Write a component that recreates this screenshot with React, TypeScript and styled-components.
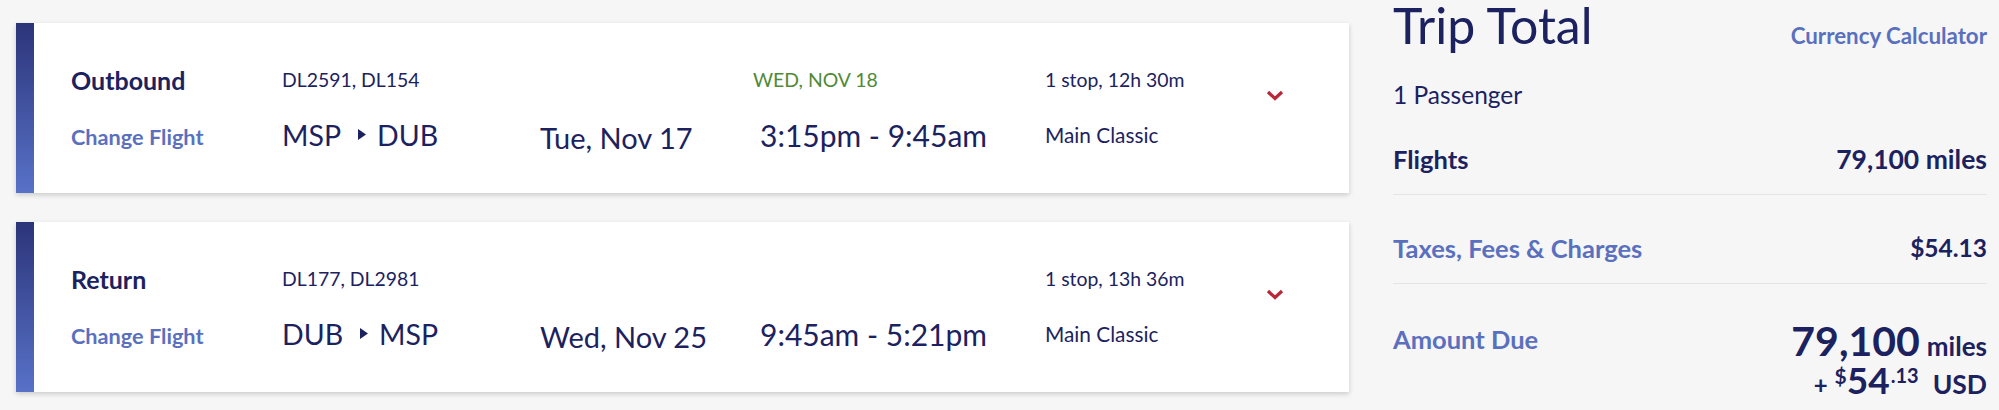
import React from "react";
import styled, { createGlobalStyle } from "styled-components";

const Global = createGlobalStyle`
  html, body { margin: 0; padding: 0; background: #f6f6f6; }
  body { font-family: Lato, "Open Sans", sans-serif; color: #1c2260; }
`;

const NAVY = "#1c2260";
const LINK = "#5a70bf";

const Page = styled.div`
  display: flex;
  align-items: flex-start;
  gap: 44px;
  padding: 0 12px 0 16px;
  width: 1999px;
  height: 410px;
  box-sizing: border-box;
`;

const Flights = styled.div`
  width: 1333px;
  padding-top: 23px;
  display: flex;
  flex-direction: column;
  gap: 29px;
`;

const Card = styled.div`
  display: flex;
  height: 170px;
  background: #fff;
  box-shadow: 0 2px 5px rgba(0, 0, 0, 0.18);
`;

const Bar = styled.div`
  width: 18px;
  flex: none;
  background: linear-gradient(to bottom, #2c3479, #5872c8);
`;

const Grid = styled.div`
  flex: 1;
  display: grid;
  grid-template-columns: 211px 258px 213px 292px 221px auto;
  grid-template-rows: 40px 40px;
  row-gap: 17px;
  padding: 37px 0 36px 37px;
  align-items: center;
`;

const Label = styled.div`
  font-size: 25px;
  font-weight: 700;
  line-height: 30px;
  color: ${NAVY};
  grid-column: 1;
  grid-row: 1;
`;

const ChangeLink = styled.a`
  font-size: 21.7px;
  font-weight: 700;
  line-height: 30px;
  color: ${LINK};
  grid-column: 1;
  grid-row: 2;
  text-decoration: none;
`;

const Small = styled.div<{ $col: number; $row: number; $green?: boolean }>`
  grid-column: ${(p) => p.$col};
  grid-row: ${(p) => p.$row};
  font-size: 19.4px;
  line-height: 24px;
  color: ${(p) => (p.$green ? "#4f8a35" : NAVY)};
`;

const Route = styled.div`
  grid-column: 2;
  grid-row: 2;
  display: flex;
  align-items: center;
  font-size: 28.5px;
  line-height: 34px;
  margin-top: -5px;
  color: ${NAVY};
`;

const Arrow = styled.svg`
  margin: 0 11px 1px 17px;
`;

const DateText = styled.div`
  grid-column: 3;
  grid-row: 2;
  font-size: 29px;
  line-height: 36px;
  margin-top: 2px;
  color: ${NAVY};
`;

const TimeText = styled.div`
  grid-column: 4;
  grid-row: 2;
  font-size: 30px;
  line-height: 34px;
  margin-left: 7px;
  margin-top: -4px;
  color: ${NAVY};
`;

const Cabin = styled.div`
  grid-column: 5;
  grid-row: 2;
  font-size: 20.8px;
  line-height: 24px;
  margin-top: -4px;
  color: ${NAVY};
`;

const Chevron = styled.svg`
  grid-column: 6;
  grid-row: 1 / span 2;
  align-self: start;
  margin-top: 30px;
`;

const Summary = styled.div`
  width: 594px;
  display: flex;
  flex-direction: column;
`;

const Header = styled.div`
  display: flex;
  justify-content: space-between;
  align-items: baseline;
  height: 50px;
`;

const Title = styled.h1`
  margin: 0;
  font-size: 50px;
  font-weight: 400;
  line-height: 50px;
  color: ${NAVY};
`;

const HeaderLink = styled.a`
  font-size: 22.3px;
  font-weight: 700;
  color: ${LINK};
  text-decoration: none;
`;

const Passengers = styled.div`
  margin-top: 30px;
  font-size: 24.5px;
  line-height: 30px;
  color: ${NAVY};
`;

const Row = styled.div<{ $pt: number; $pb: number; $border?: boolean; $mt?: number }>`
  display: flex;
  justify-content: space-between;
  align-items: flex-start;
  margin-top: ${(p) => p.$mt ?? 0}px;
  padding: ${(p) => p.$pt}px 0 ${(p) => p.$pb}px;
  border-bottom: ${(p) => (p.$border ? "1px solid #e4e4e4" : "none")};
  font-size: 25.5px;
  line-height: 30px;
  font-weight: 700;
`;

const RowLabel = styled.span<{ $link?: boolean; $mt?: number }>`
  color: ${(p) => (p.$link ? LINK : NAVY)};
  margin-top: ${(p) => p.$mt ?? 0}px;
`;

const RowValue = styled.span<{ $size?: number }>`
  color: ${NAVY};
  font-size: ${(p) => p.$size ?? 26.5}px;
`;

const Due = styled.div`
  display: flex;
  flex-direction: column;
  align-items: flex-end;
  color: ${NAVY};
`;

const DueLine = styled.div`
  display: flex;
  align-items: baseline;
  font-weight: 700;
`;

const Big = styled.span<{ $size: number }>`
  font-size: ${(p) => p.$size}px;
  line-height: ${(p) => p.$size}px;
  font-weight: 700;
`;

const Unit = styled.span<{ $size: number; $ml: number }>`
  font-size: ${(p) => p.$size}px;
  margin-left: ${(p) => p.$ml}px;
  font-weight: 700;
`;

const Sup = styled.span<{ $size: number; $ml?: number }>`
  font-size: ${(p) => p.$size}px;
  align-self: flex-start;
  line-height: ${(p) => p.$size}px;
  margin-top: 4px;
  margin-left: ${(p) => p.$ml ?? 0}px;
  font-weight: 700;
`;

type Leg = {
  label: string;
  flights: string;
  from: string;
  to: string;
  date: string;
  arrival?: string;
  time: string;
  stops: string;
};

const legs: Leg[] = [
  {
    label: "Outbound",
    flights: "DL2591, DL154",
    from: "MSP",
    to: "DUB",
    date: "Tue, Nov 17",
    arrival: "WED, NOV 18",
    time: "3:15pm - 9:45am",
    stops: "1 stop, 12h 30m",
  },
  {
    label: "Return",
    flights: "DL177, DL2981",
    from: "DUB",
    to: "MSP",
    date: "Wed, Nov 25",
    time: "9:45am - 5:21pm",
    stops: "1 stop, 13h 36m",
  },
];

function FlightCard({ leg }: { leg: Leg }) {
  return (
    <Card>
      <Bar />
      <Grid>
        <Label>{leg.label}</Label>
        <ChangeLink href="#">Change Flight</ChangeLink>
        <Small $col={2} $row={1}>{leg.flights}</Small>
        <Route>
          {leg.from}
          <Arrow width="8" height="11" viewBox="0 0 8 11">
            <polygon points="0,0 8,5.5 0,11" fill={NAVY} />
          </Arrow>
          {leg.to}
        </Route>
        <DateText>{leg.date}</DateText>
        {leg.arrival && (
          <Small $col={4} $row={1} $green>
            {leg.arrival}
          </Small>
        )}
        <TimeText>{leg.time}</TimeText>
        <Small $col={5} $row={1}>{leg.stops}</Small>
        <Cabin>Main Classic</Cabin>
        <Chevron width="18" height="11" viewBox="0 0 18 11">
          <polyline points="2,2 9,8.5 16,2" fill="none" stroke="#b8283a" strokeWidth="3.2" />
        </Chevron>
      </Grid>
    </Card>
  );
}

export default function App() {
  return (
    <>
      <Global />
      <Page>
        <Flights>
          {legs.map((l) => (
            <FlightCard key={l.label} leg={l} />
          ))}
        </Flights>
        <Summary>
          <Header>
            <Title>Trip Total</Title>
            <HeaderLink href="#">Currency Calculator</HeaderLink>
          </Header>
          <Passengers>1 Passenger</Passengers>
          <Row $mt={34} $pt={0} $pb={20} $border>
            <RowLabel>Flights</RowLabel>
            <RowValue>79,100 miles</RowValue>
          </Row>
          <Row $pt={38} $pb={20} $border>
            <RowLabel $link>Taxes, Fees &amp; Charges</RowLabel>
            <RowValue $size={24.5}>$54.13</RowValue>
          </Row>
          <Row $pt={36} $pb={0}>
            <RowLabel $link $mt={4}>Amount Due</RowLabel>
            <Due>
              <DueLine>
                <Big $size={41}>79,100</Big>
                <Unit $size={26} $ml={7}>miles</Unit>
              </DueLine>
              <DueLine>
                <Unit $size={24} $ml={0}>+</Unit>
                <Sup $size={21} $ml={7}>$</Sup>
                <Big $size={37}>54</Big>
                <Sup $size={20} $ml={1}>.13</Sup>
                <Unit $size={26.5} $ml={14}>USD</Unit>
              </DueLine>
            </Due>
          </Row>
        </Summary>
      </Page>
    </>
  );
}
